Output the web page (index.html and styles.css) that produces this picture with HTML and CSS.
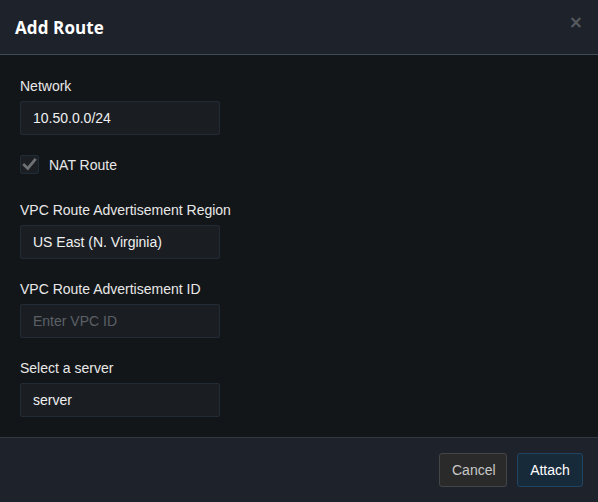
FILE: index.html
```html
<!DOCTYPE html>
<html>
<head>
<meta charset="utf-8">
<link rel="stylesheet" href="styles.css">
</head>
<body>
<div class="modal">
  <div class="modal-header">
    <h4 class="modal-title">Add Route</h4>
    <button class="close" type="button">×</button>
  </div>
  <div class="modal-body">
    <div class="form-group">
      <label class="label">Network</label>
      <input class="input" type="text" value="10.50.0.0/24">
    </div>
    <div class="check-row">
      <span class="checkbox">
        <svg width="15" height="15" viewBox="0 0 15 15"><path d="M2.2 8 L5.8 11.4 L12.8 3" fill="none" stroke="#6e7073" stroke-width="2.8" stroke-linecap="square"/></svg>
      </span>
      <span class="check-label">NAT Route</span>
    </div>
    <div class="form-group">
      <label class="label">VPC Route Advertisement Region</label>
      <input class="input" type="text" value="US East (N. Virginia)">
    </div>
    <div class="form-group">
      <label class="label">VPC Route Advertisement ID</label>
      <input class="input" type="text" placeholder="Enter VPC ID">
    </div>
    <div class="form-group last">
      <label class="label">Select a server</label>
      <input class="input" type="text" value="server">
    </div>
  </div>
  <div class="modal-footer">
    <button class="btn btn-cancel" type="button">Cancel</button>
    <button class="btn btn-primary" type="button">Attach</button>
  </div>
</div>
</body>
</html>
```

FILE: styles.css
```css
html, body {
  margin: 0;
  padding: 0;
  background: #141619;
}
body {
  font-family: "Liberation Sans", Arial, sans-serif;
  font-size: 14px;
  color: #e6e6e6;
}
.modal {
  width: 598px;
  height: 502px;
  display: flex;
  flex-direction: column;
  background: #131619;
}
.modal-header {
  box-sizing: border-box;
  display: flex;
  align-items: center;
  justify-content: space-between;
  padding: 0 15px 0 15px;
  background: #1e222a;
  border-bottom: 1px solid #3b4c58;
  flex: 0 0 55px;
}
.modal-title {
  margin: 0;
  font-family: "Open Sans", sans-serif;
  font-weight: 700;
  font-size: 17px;
  color: #ffffff;
  letter-spacing: 0.1px;
}
.close {
  background: none;
  border: none;
  padding: 0;
  margin: 0;
  font-family: "DejaVu Sans", sans-serif;
  font-weight: 700;
  font-size: 17px;
  line-height: 1;
  color: #575a5f;
  position: relative;
  top: -5px;
}
.modal-body {
  flex: 1;
  padding: 23px 20px 0 20px;
  display: flex;
  flex-direction: column;
}
.form-group {
  display: flex;
  flex-direction: column;
  margin-bottom: 22px;
}
.form-group.last {
  margin-bottom: 0;
}
.label {
  font-size: 14px;
  line-height: 16px;
  color: #e8e8e8;
  margin-bottom: 7px;
}
.input {
  width: 200px;
  height: 34px;
  box-sizing: border-box;
  background: #1a1e23;
  border: 1px solid #222c36;
  border-radius: 2px;
  padding: 0 12px;
  font-family: "Liberation Sans", Arial, sans-serif;
  font-size: 14px;
  color: #f0f0f0;
  outline: none;
}
.input::placeholder {
  color: #5c6066;
}
.check-row {
  display: flex;
  align-items: center;
  margin: -2px 0 28px 0;
}
.checkbox {
  width: 19px;
  height: 19px;
  box-sizing: border-box;
  border: 1px solid #1f2d39;
  background: #1b1f24;
  border-radius: 2px;
  display: flex;
  align-items: center;
  justify-content: center;
  margin-right: 10px;
}
.check-label {
  font-size: 14px;
  color: #e8e8e8;
}
.modal-footer {
  flex: 0 0 65px;
  box-sizing: border-box;
  border-top: 1px solid #2f3a44;
  background: #1e222a;
  display: flex;
  justify-content: flex-end;
  align-items: center;
  padding: 0 15px 0 0;
  gap: 10px;
}
.btn {
  height: 34px;
  box-sizing: border-box;
  border-radius: 3px;
  padding: 0 12px;
  font-family: "Liberation Sans", Arial, sans-serif;
  font-size: 14px;
}
.btn-cancel {
  background: #2a2a2b;
  border: 1px solid #434547;
  color: #c8c8c8;
  width: 68px;
}
.btn-primary {
  background: #172a3a;
  border: 1px solid #214561;
  color: #ffffff;
  width: 66px;
}
```
